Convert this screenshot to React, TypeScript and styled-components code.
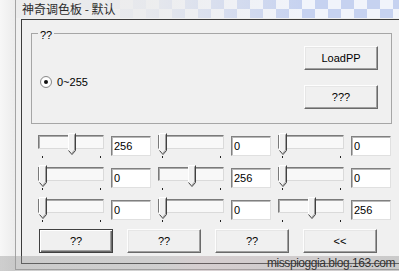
import React from "react";
import styled, { createGlobalStyle, css } from "styled-components";

const Global = createGlobalStyle`
  html, body { margin: 0; padding: 0; }
  body { background: #f4f4f4; }
`;

const Screen = styled.div`
  position: relative;
  display: flex;
  width: 399px;
  height: 271px;
  overflow: hidden;
  background: #f4f4f4;
  font-family: "Liberation Sans", Arial, sans-serif;
  font-size: 11px;
  color: #000;
`;

const LeftFrame = styled.div`
  width: 15px;
  flex: none;
  background: linear-gradient(90deg, #f7f7f7, #ececec);
`;

const Window = styled.div`
  flex: 1;
  height: 270px;
  display: flex;
  flex-direction: column;
  border-left: 1px solid #a4a4a4;
  border-bottom: 1px solid #a4a4a4;
  box-sizing: border-box;
  background: #f0f0f0;
`;

const TitleBar = styled.div`
  height: 18px;
  flex: none;
  padding-left: 6px;
  line-height: 17px;
  font-family: "Noto Sans CJK SC", "Liberation Sans", sans-serif;
  font-size: 12px;
  color: #2c2c2c;
  background-color: #e4eaf7;
  background-image: linear-gradient(
      90deg,
      #ececec 0%,
      rgba(236, 236, 236, 0.85) 35%,
      rgba(236, 236, 236, 0) 75%
    ),
    conic-gradient(#c6d2f0 25%, #f1f4fb 0 50%, #c6d2f0 0 75%, #f1f4fb 0);
  background-size: 100% 100%, 26px 26px;
  background-position: 0 0, 0 -4px;
`;

const Body = styled.div`
  flex: 1;
  display: flex;
  padding: 1px 0 5px 5px;
`;

const Panel = styled.div`
  flex: 1;
  display: flex;
  flex-direction: column;
  border-top: 1px solid #3c3c3c;
  border-left: 1px solid #3c3c3c;
  border-bottom: 1px solid #3c3c3c;
  background: #f0f0f0;
`;

const Group = styled.fieldset`
  width: 361px;
  box-sizing: border-box;
  margin: 5px 0 0 9px;
  padding: 4px 13px 14px 8px;
  border: 1px solid #a6a6a6;
  display: flex;
  justify-content: space-between;
  align-items: flex-start;
`;

const Legend = styled.legend`
  margin-left: -2px;
  padding: 4px 2px 0 2px;
  line-height: 13px;
  font-size: 11px;
`;

const RadioRow = styled.label`
  display: flex;
  align-items: center;
  gap: 5px;
  margin-top: 30px;
  height: 12px;
`;

const RadioMark = styled.span`
  width: 12px;
  height: 12px;
  box-sizing: border-box;
  border-radius: 50%;
  border: 1px solid #8a8a8a;
  background: radial-gradient(circle, #fff 55%, #e2e2e2);
  display: flex;
  align-items: center;
  justify-content: center;

  &::after {
    content: "";
    width: 4px;
    height: 4px;
    border-radius: 50%;
    background: #111;
  }
`;

const ButtonCol = styled.div`
  display: flex;
  flex-direction: column;
  gap: 15px;
`;

const Btn = styled.button<{ $default?: boolean }>`
  width: 74px;
  height: 24px;
  padding: 0;
  box-sizing: border-box;
  font-family: "Liberation Sans", Arial, sans-serif;
  font-size: 11px;
  color: #000;
  background: #f0f0f0;
  border: 1px solid;
  border-color: #fdfdfd #6a6a6a #6a6a6a #fdfdfd;
  box-shadow: inset -1px -1px #a0a0a0, inset 1px 1px #e6e6e6;
  ${(p) =>
    p.$default &&
    css`
      border-color: #404040;
      box-shadow: inset 1px 1px #fff, inset -1px -1px #6a6a6a,
        inset -2px -2px #a0a0a0;
    `}
`;

const SliderGrid = styled.div`
  display: grid;
  grid-template-columns: repeat(3, 66px 40px);
  grid-auto-rows: 26px;
  column-gap: 7px;
  row-gap: 6px;
  margin: 9px 0 0 16px;
`;

const SliderBox = styled.div`
  position: relative;
  height: 26px;
`;

const Track = styled.div`
  height: 14px;
  margin-top: 2px;
  box-sizing: border-box;
  background: #f8f8f8;
  border: 1px solid;
  border-color: #7a7a7a #dadada #dadada #7a7a7a;
  box-shadow: inset 1px 1px #a9a9a9;
`;

const Ticks = styled.div`
  display: flex;
  justify-content: space-between;
  margin-top: 7px;
  padding: 0 3px 0 4px;
`;

const Tick = styled.span`
  width: 1px;
  height: 2px;
  background: #222;
`;

const Thumb = styled.svg`
  position: absolute;
  top: 0;
  width: 8px;
  height: 22px;
`;

const Edit = styled.input`
  width: 40px;
  height: 20px;
  margin: 3px 0 0;
  padding: 0 0 0 2px;
  box-sizing: border-box;
  font-family: "Liberation Sans", Arial, sans-serif;
  font-size: 11px;
  color: #000;
  background: #fff;
  border: 1px solid;
  border-color: #808080 #e0e0e0 #e0e0e0 #808080;
  box-shadow: inset 1px 1px #b8b8b8;
  outline: none;
`;

const ButtonRow = styled.div`
  display: flex;
  gap: 14px;
  margin: 6px 0 0 17px;
`;

const Watermark = styled.div`
  position: absolute;
  left: 0;
  right: 0;
  bottom: 0;
  height: 15px;
  background: linear-gradient(
    90deg,
    rgba(150, 150, 150, 0.42) 0%,
    rgba(150, 150, 150, 0.36) 40%,
    rgba(170, 150, 155, 0.38) 50%,
    rgba(150, 150, 150, 0.42) 100%
  );
  text-align: right;
  padding-right: 4px;
  line-height: 15px;
  font-size: 12px;
  letter-spacing: -0.45px;
  color: #333;
`;

function Slider({ value }: { value: number }) {
  const left = 1 + Math.round((value / 512) * 58);
  return (
    <SliderBox>
      <Track />
      <Ticks>
        <Tick />
        <Tick />
      </Ticks>
      <Thumb viewBox="0 0 8 22" style={{ left }}>
        <path d="M0.5 0.5H7.5V17.5L4 21.5L0.5 17.5Z" fill="#f0f0f0" />
        <path d="M0.5 17.5V0.5H7" stroke="#fff" fill="none" />
        <path d="M7.5 0.5V17.5L4 21.5L0.5 17.5" stroke="#404040" fill="none" />
        <path d="M6.5 1.5V17L4 20" stroke="#a0a0a0" fill="none" />
      </Thumb>
    </SliderBox>
  );
}

const rows = [
  [256, 0, 0],
  [0, 256, 0],
  [0, 0, 256],
];

export default function App() {
  return (
    <Screen>
      <Global />
      <LeftFrame />
      <Window>
        <TitleBar>神奇调色板 - 默认</TitleBar>
        <Body>
          <Panel>
            <Group>
              <Legend>??</Legend>
              <RadioRow>
                <RadioMark />
                0~255
              </RadioRow>
              <ButtonCol>
                <Btn type="button">LoadPP</Btn>
                <Btn type="button">???</Btn>
              </ButtonCol>
            </Group>
            <SliderGrid>
              {rows.map((row, r) =>
                row.map((v, c) => (
                  <React.Fragment key={`${r}-${c}`}>
                    <Slider value={v} />
                    <Edit readOnly value={String(v)} />
                  </React.Fragment>
                ))
              )}
            </SliderGrid>
            <ButtonRow>
              <Btn type="button" $default>
                ??
              </Btn>
              <Btn type="button">??</Btn>
              <Btn type="button">??</Btn>
              <Btn type="button">&lt;&lt;</Btn>
            </ButtonRow>
          </Panel>
        </Body>
      </Window>
      <Watermark>misspioggia.blog.163.com</Watermark>
    </Screen>
  );
}
